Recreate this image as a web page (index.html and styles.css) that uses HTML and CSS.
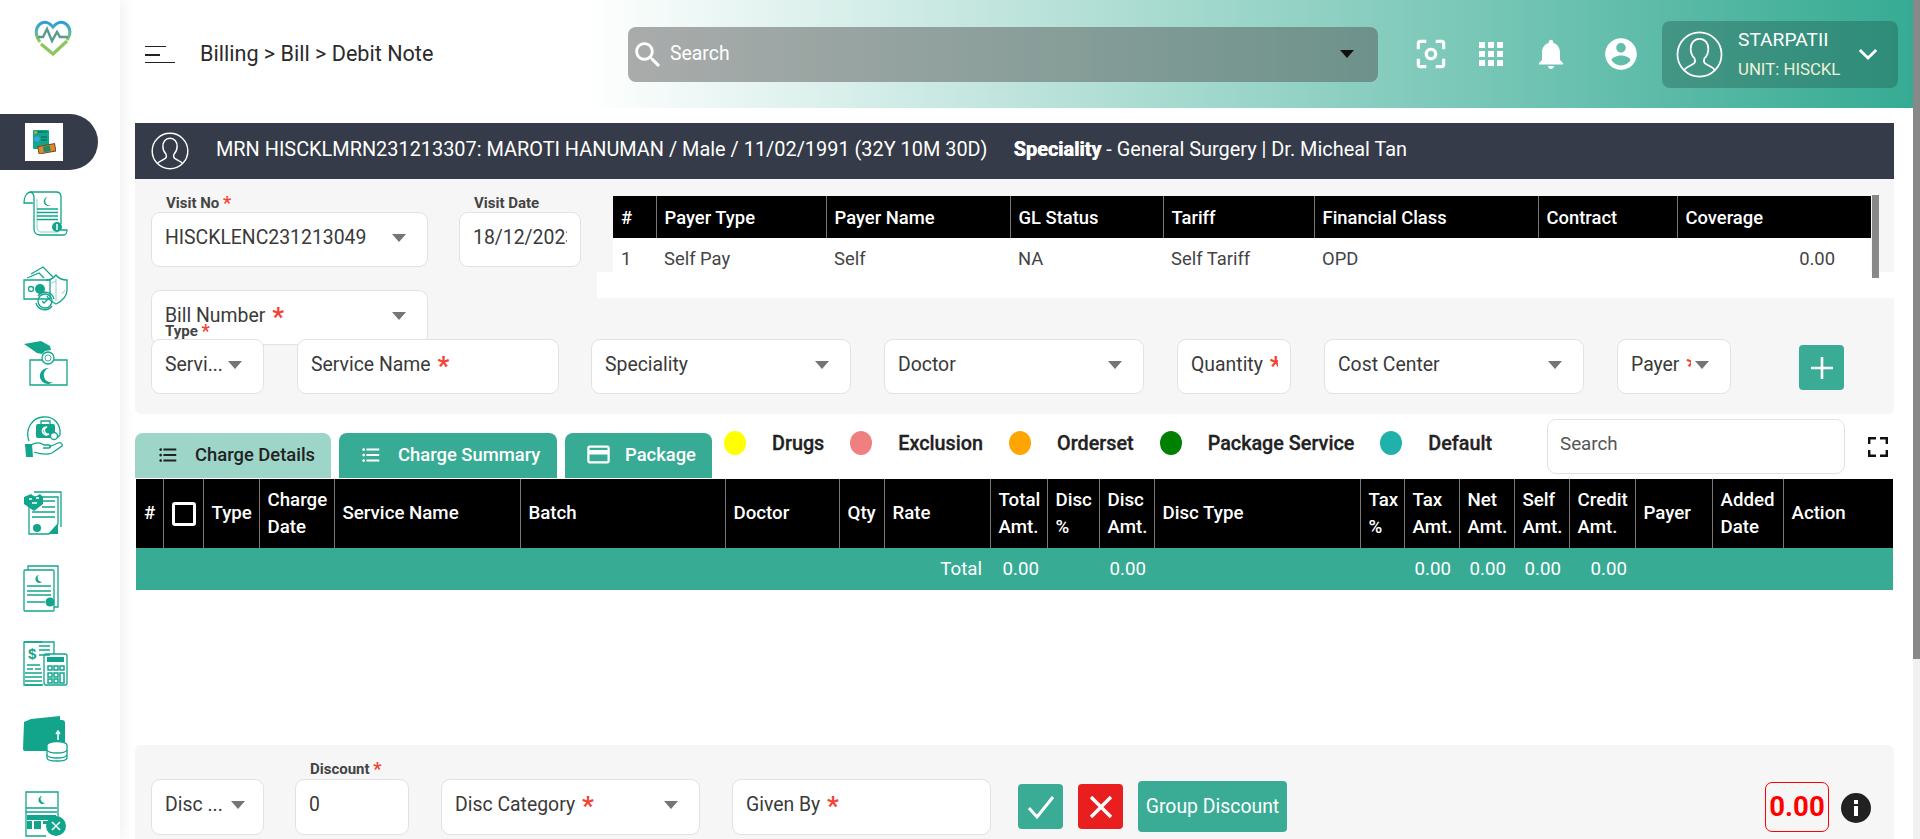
FILE: index.html
```html
<!DOCTYPE html>
<html lang="en">
<head>
    <meta charset="UTF-8" />
    <meta name="viewport" content="width=device-width, initial-scale=1.0" />
    <title>Debit Note</title>
    <link rel="stylesheet" href="styles.css">
</head>
<body>
<div class="app">
    <aside class="sidebar">
        <div class="logo">
            <svg width="38" height="36" viewBox="0 0 38 36" fill="none">
                <defs>
                    <linearGradient id="logoGrad" x1="0" y1="0" x2="0" y2="1">
                        <stop offset="0" stop-color="#2a9fd6"/>
                        <stop offset="0.55" stop-color="#5fb5a0"/>
                        <stop offset="1" stop-color="#9ccc4a"/>
                    </linearGradient>
                </defs>
                <path d="M6 22C1 16 1 8 6 4c4-3 9-2 13 3 4-5 9-6 13-3 5 4 5 11 1 16" stroke="url(#logoGrad)" stroke-width="3"/>
                <path d="M4 17h5l4-8 5 12 5-9 3 5h8" stroke="#5a9a8c" stroke-width="2.4"/>
                <path d="M7 24l12 10 14-13" stroke="#8cc65c" stroke-width="3.2"/>
            </svg>
        </div>
        <div class="nav-active">
            <div class="nav-active-box">
                <svg width="24" height="24" viewBox="0 0 24 24">
                    <rect x="1" y="0" width="16" height="19" rx="1" fill="#12a58c"/>
                    <circle cx="3.500" cy="2.500" r="1.400" fill="#f39a1e"/>
                    <circle cx="5" cy="9" r="2.800" fill="#35a8e0"/>
                    <path d="M6 2h9M9 7h6M9 10h6" stroke="#0a5f50" stroke-width="1"/>
                    <rect x="6" y="15" width="17" height="7.500" fill="#d98a32" stroke="#7a4a12" transform="rotate(-10 15 17)"/>
                    <rect x="11" y="16" width="7" height="5.500" fill="#1e8a6f" transform="rotate(-10 15 17)"/>
                </svg>
            </div>
        </div>
        <div class="nav-item">
            <svg class="nav-icon" viewBox="0 0 45 45">
                <path d="M10 12H1c0-5 2-10 6-11h26c3 0 5 2 5 5v27"/>
                <path d="M7 1c3 0 4 3 4 7v30c0 4 3 6 6 6h24c2 0 3-3 3-5h-6"/>
                <path class="thin" d="M14 8v28c0 3 2 5 4 5h17"/>
                <path class="solid" d="M25 6a4.500 4.500 0 1 0 3 8 4 4 0 0 1-3-8z"/>
                <path d="M14 18h21M14 21.500h21M14 25h21M14 28.500h21"/>
                <circle class="solid" cx="34" cy="36" r="5"/>
                <path class="white" d="M34 33v6"/>
            </svg>
        </div>
        <div class="nav-item">
            <svg class="nav-icon" viewBox="0 0 45 45">
                <path d="M1 14h26v19H1z"/>
                <path d="M4 12l12-5 5 5M8 8l12-7 10 10"/>
                <circle cx="8" cy="23" r="2.500"/>
                <circle class="solid" cx="17" cy="23" r="5"/>
                <path d="M23 14c4 0 7-1 10-5 3 4 7 5 11 5v10c0 7-5 11-11 14-4-2-7-4-9-8"/>
                <path class="thin" d="M33 13v22M27 17c2 0 4-1 6-2M39 28l3-4"/>
                <circle cx="22" cy="35" r="7"/>
                <path d="M13 37a9 9 0 0 0 16 3M31 33a9 9 0 0 0-16-3"/>
                <path d="M19 35l2 2 4-4"/>
            </svg>
        </div>
        <div class="nav-item">
            <svg class="nav-icon" viewBox="0 0 45 45">
                <path class="solid" d="M1 3l17-3 9 5 1 4-6 1-3 3-5-1z"/>
                <path d="M8 19h37v25H8z" transform="translate(-1 0)"/>
                <circle class="paper" cx="25" cy="17" r="6"/>
                <circle class="thin-paper" cx="25" cy="17" r="3"/>
                <path class="solid" d="M26 27a8 8 0 1 0 4 14 7 7 0 0 1-4-14z"/>
            </svg>
        </div>
        <div class="nav-item">
            <svg class="nav-icon" viewBox="0 0 45 45">
                <path d="M6 25C2 14 8 2 20 1c11-1 18 7 17 18l-3 3"/>
                <rect class="solid" x="13" y="8" width="19" height="14" rx="2"/>
                <path d="M18 8V5h9v3"/>
                <path class="white" d="M24 11a4 4 0 1 0 2 7 3 3 0 0 1-2-7z"/>
                <circle class="paper" cx="31" cy="20" r="3.500"/>
                <path d="M8 29c5-3 9-3 13 0h5c2 0 2 3 0 3h-6M26 31l9-4c3-1 5 1 4 3l-10 7c-5 2-12 1-18-1"/>
                <path class="solid" d="M2 28h7l1 13H3z"/>
            </svg>
        </div>
        <div class="nav-item">
            <svg class="nav-icon" viewBox="0 0 45 45">
                <path d="M11 1h27v35"/>
                <path d="M6 6h29v27l-9 10H6z"/>
                <path d="M19 10h13M19 16h13M9 21h23M9 26h23"/>
                <path class="solid" d="M1 6l7-3 4 3 5-3 3 3v7l-9 7-10-7z"/>
                <path class="white" d="M6 8h3M13 7h3M9 12h5"/>
                <circle class="solid" cx="14" cy="37" r="4"/>
                <path class="solid" d="M35 33v10H26z"/>
            </svg>
        </div>
        <div class="nav-item">
            <svg class="nav-icon" viewBox="0 0 45 45">
                <path d="M5 4V0h30v41h-4"/>
                <rect x="1" y="4" width="30" height="41" rx="1"/>
                <path class="solid" d="M16 9a4 4 0 1 0 3 7 4 4 0 0 1-3-7z"/>
                <path d="M4 20h24M4 25h24M4 29h24M4 36h18"/>
                <circle class="solid" cx="27" cy="36" r="4.500"/>
            </svg>
        </div>
        <div class="nav-item">
            <svg class="nav-icon" viewBox="0 0 45 45">
                <path d="M19 1H1v43h19"/>
                <path d="M1 1h30v12"/>
                <text class="dollar" x="5" y="18">$</text>
                <path d="M16 5h11M16 9h11M16 14h11M4 24h13M4 28h6M12 28h6"/>
                <path d="M2 32h17M2 36h17M2 40h17M2 44h17"/>
                <rect x="21" y="13" width="23" height="31" rx="2"/>
                <rect class="solid" x="24" y="16" width="17" height="5"/>
                <path class="thick" d="M25 25h4v4h-4zM31 25h4v4h-4zM37 25h4v4h-4zM25 32h4v4h-4zM31 32h4v4h-4zM25 38h4v4h-4zM31 38h4v4h-4zM37 32h4v10h-4z"/>
            </svg>
        </div>
        <div class="nav-item">
            <svg class="nav-icon" viewBox="0 0 45 45">
                <path class="solid" d="M8 3L37 0v4h2c2 0 3 1 3 3v28H2c-1 0-2-1-2-2L1 6z"/>
                <path class="white" d="M35 15v9M33 18l2-3 2 3"/>
                <ellipse class="solid-line" cx="34" cy="29" rx="10" ry="3.500"/>
                <path class="solid-line" d="M24 29v13c0 4 20 4 20 0V29"/>
                <path d="M24 34c2 4 18 4 20 0M24 39c2 4 18 4 20 0"/>
            </svg>
        </div>
        <div class="nav-item">
            <svg class="nav-icon" viewBox="0 0 45 45">
                <path d="M23 45H3V1h32v31"/>
                <path class="solid" d="M19 5a4 4 0 1 0 3 7 4 4 0 0 1-3-7z"/>
                <path d="M3 17h31M3 21h31"/>
                <path class="solid" d="M4 24h29v5H4zM4 30h5v8H4zM11 30h7v8h-7zM20 30h13v3H20z"/>
                <circle class="solid" cx="33" cy="35" r="10"/>
                <path class="white" d="M29 31l8 8M37 31l-8 8"/>
            </svg>
        </div>
    </aside>

    <div class="main">
        <header class="topbar">
            <div class="burger"><span class="b1"></span><span class="b2"></span><span class="b3"></span></div>
            <div class="crumb">Billing &gt; Bill &gt; Debit Note</div>
            <div class="global-search">
                <svg width="34" height="34" viewBox="0 0 24 24" fill="#fff"><path d="M15.500 14h-.79l-.28-.27C15.410 12.590 16 11.110 16 9.500 16 5.910 13.090 3 9.500 3S3 5.910 3 9.500 5.910 16 9.500 16c1.610 0 3.090-.59 4.230-1.570l.27.28v.79l5 4.990L20.490 19l-4.990-5zm-6 0C7.010 14 5 11.990 5 9.500S7.010 5 9.500 5 14 7.010 14 9.500 11.990 14 9.500 14z"/></svg>
                <span class="global-search-text">Search</span>
                <span class="black-arrow"></span>
            </div>
            <div class="top-icons">
                <svg class="top-icon" viewBox="0 0 24 24"><path d="M5 15H3v4c0 1.100.9 2 2 2h4v-2H5v-4zM5 5h4V3H5c-1.100 0-2 .9-2 2v4h2V5zm14-2h-4v2h4v4h2V5c0-1.100-.9-2-2-2zm0 16h-4v2h4c1.100 0 2-.9 2-2v-4h-2v4zM12 8c-2.210 0-4 1.790-4 4s1.790 4 4 4 4-1.790 4-4-1.790-4-4-4zm0 6c-1.100 0-2-.9-2-2s.9-2 2-2 2 .9 2 2-.9 2-2 2z"/></svg>
                <svg class="top-icon" viewBox="0 0 24 24"><path d="M4 8h4V4H4v4zm6 12h4v-4h-4v4zm-6 0h4v-4H4v4zm0-6h4v-4H4v4zm6 0h4v-4h-4v4zm6-10v4h4V4h-4zm-6 4h4V4h-4v4zm6 6h4v-4h-4v4zm0 6h4v-4h-4v4z"/></svg>
                <svg class="top-icon" viewBox="0 0 24 24"><path d="M12 22c1.100 0 2-.9 2-2h-4c0 1.100.89 2 2 2zm6-6v-5c0-3.070-1.640-5.640-4.500-6.320V4c0-.83-.67-1.500-1.500-1.500s-1.500.67-1.500 1.500v.68C7.630 5.360 6 7.920 6 11v5l-2 2v1h16v-1l-2-2z"/></svg>
                <svg class="top-icon account" viewBox="0 0 24 24"><path d="M12 2C6.480 2 2 6.480 2 12s4.480 10 10 10 10-4.480 10-10S17.520 2 12 2zm0 3c1.660 0 3 1.340 3 3s-1.340 3-3 3-3-1.340-3-3 1.340-3 3-3zm0 14.200c-2.500 0-4.710-1.280-6-3.220.03-1.990 4-3.080 6-3.080 1.990 0 5.970 1.090 6 3.080-1.290 1.940-3.500 3.220-6 3.220z"/></svg>
            </div>
            <div class="user-box">
                <svg class="avatar-big" viewBox="0 0 48 48"><use href="#avatar"/></svg>
                <div class="user-text">
                    <div class="user-name">STARPATII</div>
                    <div class="user-unit">UNIT: HISCKL</div>
                </div>
                <svg class="user-chevron" viewBox="0 0 24 24"><path d="M5 8.500l7 7 7-7"/></svg>
            </div>
        </header>

        <div class="content">
            <div class="patient-bar">
                <svg class="avatar-small" viewBox="0 0 48 48">
                    <g id="avatar" fill="none" stroke="#fff" stroke-width="1.800">
                        <circle cx="24" cy="24" r="22.500"/>
                        <path d="M24 8c-6 0-9 5-9 10 0 4 2 8 4 10 1 3 0 5-2 6-3 2-7 3-9 6"/>
                        <path d="M24 8c6 0 9 5 9 10 0 4-2 8-4 10-1 3 0 5 2 6 3 2 7 3 9 6"/>
                    </g>
                </svg>
                <span class="patient-text">MRN HISCKLMRN231213307: MAROTI HANUMAN / Male / 11/02/1991 (32Y 10M 30D)</span>
                <span class="patient-spec"><b>Speciality</b> - General Surgery | Dr. Micheal Tan</span>
            </div>

            <div class="top-panel">
                <div class="top-grid">
                    <div class="left-forms">
                        <div class="visit-row">
                            <div class="field w-visit">
                                <label class="float-label">Visit No <i>*</i></label>
                                <span class="field-text">HISCKLENC231213049</span><span class="arrow"></span>
                            </div>
                            <div class="field w-date">
                                <label class="float-label">Visit Date</label>
                                <span class="field-text clip clip-date">18/12/2023</span>
                            </div>
                        </div>
                        <div class="field w-visit bill-field">
                            <span class="field-text">Bill Number <i>*</i></span><span class="arrow"></span>
                        </div>
                    </div>
                    <div class="payer-col">
                        <div class="payer-gray">
                            <table class="payer-table">
                                <thead>
                                    <tr><th>#</th><th>Payer Type</th><th>Payer Name</th><th>GL Status</th><th>Tariff</th><th>Financial Class</th><th>Contract</th><th>Coverage</th></tr>
                                </thead>
                                <tbody>
                                    <tr><td>1</td><td>Self Pay</td><td>Self</td><td>NA</td><td>Self Tariff</td><td>OPD</td><td></td><td class="num">0.00</td></tr>
                                </tbody>
                            </table>
                            <div class="payer-thumb"></div>
                        </div>
                        <div class="white-strip"></div>
                    </div>
                </div>

                <div class="service-row">
                    <div class="field w-type">
                        <label class="float-label type-label">Type <i>*</i></label>
                        <span class="field-text">Servi...</span><span class="arrow"></span>
                    </div>
                    <div class="field w-service"><span class="field-text">Service Name <i>*</i></span></div>
                    <div class="field w-wide"><span class="field-text">Speciality</span><span class="arrow"></span></div>
                    <div class="field w-wide"><span class="field-text">Doctor</span><span class="arrow"></span></div>
                    <div class="field w-small"><span class="field-text clip clip-qty">Quantity <i>*</i></span></div>
                    <div class="field w-wide"><span class="field-text">Cost Center</span><span class="arrow"></span></div>
                    <div class="field w-small"><span class="field-text clip clip-payer">Payer <i>*</i></span><span class="arrow"></span></div>
                    <button class="add-btn">
                        <svg width="30" height="30" viewBox="0 0 30 30"><path d="M15 4v22M4 15h22" stroke="#fff" stroke-width="2.600"/></svg>
                    </button>
                </div>
            </div>

            <div class="toolbar">
                <div class="tabs">
                    <div class="tab tab-on">
                        <svg class="tab-icon" viewBox="0 0 24 24"><path d="M4 10.500c-.83 0-1.500.67-1.500 1.500s.67 1.500 1.500 1.500 1.500-.67 1.500-1.500-.67-1.500-1.500-1.500zm0-6c-.83 0-1.500.67-1.500 1.500S3.170 7.500 4 7.500 5.500 6.830 5.500 6 4.830 4.500 4 4.500zm0 12c-.83 0-1.500.68-1.500 1.500s.68 1.500 1.500 1.500 1.500-.68 1.500-1.500-.67-1.500-1.500-1.500zM7 19h14v-2H7v2zm0-6h14v-2H7v2zm0-8v2h14V5H7z"/></svg>
                        Charge Details
                    </div>
                    <div class="tab tab-summary">
                        <svg class="tab-icon" viewBox="0 0 24 24"><path d="M4 10.500c-.83 0-1.500.67-1.500 1.500s.67 1.500 1.500 1.500 1.500-.67 1.500-1.500-.67-1.500-1.500-1.500zm0-6c-.83 0-1.500.67-1.500 1.500S3.170 7.500 4 7.500 5.500 6.830 5.500 6 4.830 4.500 4 4.500zm0 12c-.83 0-1.500.68-1.500 1.500s.68 1.500 1.500 1.500 1.500-.68 1.500-1.500-.67-1.500-1.500-1.500zM7 19h14v-2H7v2zm0-6h14v-2H7v2zm0-8v2h14V5H7z"/></svg>
                        Charge Summary
                    </div>
                    <div class="tab tab-package">
                        <svg class="tab-icon" viewBox="0 0 24 24"><path d="M20 4H4c-1.100 0-2 .9-2 2v12c0 1.100.9 2 2 2h16c1.100 0 2-.9 2-2V6c0-1.100-.9-2-2-2zm0 14H4v-6h16v6zm0-10H4V6h16v2z"/></svg>
                        Package
                    </div>
                </div>
                <div class="legend">
                    <span class="dot dot-drugs"></span><span class="legend-text">Drugs</span>
                    <span class="dot dot-excl"></span><span class="legend-text">Exclusion</span>
                    <span class="dot dot-order"></span><span class="legend-text">Orderset</span>
                    <span class="dot dot-pack"></span><span class="legend-text">Package Service</span>
                    <span class="dot dot-default"></span><span class="legend-text">Default</span>
                </div>
                <div class="table-search">Search</div>
                <svg class="fullscreen" viewBox="0 0 20 20"><path d="M1.200 7V1.200H8M12 1.200h6.800V7M18.800 13v5.800H12M8 18.800H1.200V13"/></svg>
            </div>

            <table class="charge-table">
                <thead>
                    <tr>
                        <th>#</th><th><span class="check"></span></th><th>Type</th><th>Charge Date</th><th>Service Name</th><th>Batch</th><th>Doctor</th><th>Qty</th><th>Rate</th><th>Total Amt.</th><th>Disc %</th><th>Disc Amt.</th><th>Disc Type</th><th>Tax %</th><th>Tax Amt.</th><th>Net Amt.</th><th>Self Amt.</th><th>Credit Amt.</th><th>Payer</th><th>Added Date</th><th>Action</th>
                    </tr>
                </thead>
                <tbody>
                    <tr>
                        <td></td><td></td><td></td><td></td><td></td><td></td><td></td><td></td><td class="num">Total</td><td class="num">0.00</td><td></td><td class="num">0.00</td><td></td><td></td><td class="num">0.00</td><td class="num">0.00</td><td class="num">0.00</td><td class="num">0.00</td><td></td><td></td><td></td>
                    </tr>
                </tbody>
            </table>

            <div class="bottom-panel">
                <div class="field w-disc"><span class="field-text">Disc ...</span><span class="arrow"></span></div>
                <div class="field w-discount">
                    <label class="float-label discount-label">Discount <i>*</i></label>
                    <span class="field-text">0</span>
                </div>
                <div class="field w-cat"><span class="field-text">Disc Category <i>*</i></span><span class="arrow"></span></div>
                <div class="field w-cat"><span class="field-text">Given By <i>*</i></span></div>
                <button class="square-btn btn-ok">
                    <svg width="34" height="34" viewBox="0 0 34 34" fill="none"><path d="M5 18l8 9L29 7" stroke="#fff" stroke-width="3"/></svg>
                </button>
                <button class="square-btn btn-no">
                    <svg width="34" height="34" viewBox="0 0 34 34" fill="none"><path d="M7 7l20 20M27 7L7 27" stroke="#fff" stroke-width="3.400"/></svg>
                </button>
                <button class="group-btn">Group Discount</button>
                <div class="balance">0.00</div>
                <div class="info-dot">
                    <svg width="30" height="30" viewBox="0 0 30 30"><circle cx="15" cy="15" r="15" fill="#212121"/><path d="M13 13h4v10h-4zM13 7h4v4h-4z" fill="#fff"/></svg>
                </div>
            </div>
        </div>
    </div>

    <div class="page-scroll"><div class="page-thumb"></div></div>
</div>
</body>
</html>
```

FILE: styles.css
```css
* {
    box-sizing: border-box;
}

body {
    margin: 0;
    font-family: Roboto, "Liberation Sans", sans-serif;
    color: #333;
    background-color: #fff;
    overflow: hidden;
}

.app {
    display: flex;
    height: 839px;
    overflow: hidden;
}

/* left menu */
.sidebar {
    width: 120px;
    flex: none;
    background-color: #fff;
    box-shadow: 2px 0 14px rgba(40, 40, 90, 0.08);
    position: relative;
    z-index: 2;
    height: 839px;
    overflow: hidden;
}

.logo {
    height: 114px;
    padding: 20px 0 0 34px;
}

.nav-active {
    width: 98px;
    height: 56px;
    margin-bottom: 6px;
    background-color: #353b48;
    border-radius: 0 28px 28px 0;
    padding: 9px 0 0 25px;
}

.nav-active-box {
    width: 38px;
    height: 38px;
    background-color: #fff;
    padding: 7px;
}

.nav-item {
    width: 90px;
    height: 75px;
    display: flex;
    align-items: center;
    justify-content: center;
}

.nav-icon {
    width: 45px;
    height: 45px;
    fill: none;
    stroke: #12a58c;
    stroke-width: 1.300;
    overflow: visible;
}

.nav-icon .solid {
    fill: #12a58c;
    stroke: none;
}

.nav-icon .white {
    stroke: #fff;
    stroke-width: 1.500;
}

.nav-icon .thin {
    stroke-width: 0.800;
    stroke: #6cc8b7;
}

.nav-icon .paper {
    fill: #fff;
}

.nav-icon .thin-paper {
    fill: #fff;
    stroke-width: 0.800;
}

.nav-icon .solid-line {
    fill: #fff;
    stroke-width: 1.300;
}

.nav-icon .thick {
    stroke-width: 1.500;
}

.nav-icon .dollar {
    font-family: "Liberation Sans", sans-serif;
    font-size: 15px;
    font-weight: 700;
    fill: #12a58c;
    stroke: none;
}

.main {
    flex: 1;
    min-width: 0;
}

/* header */
.topbar {
    height: 108px;
    display: flex;
    align-items: center;
    background: linear-gradient(90deg, #fff 26%, #36ab93 100%);
}

.burger {
    width: 30px;
    margin-left: 25px;
    display: flex;
    flex-direction: column;
}

.burger span {
    display: block;
    background-color: #222;
}

.b1 {
    width: 21px;
    height: 1px;
    margin-bottom: 7px;
}

.b2 {
    width: 15px;
    height: 2px;
    margin-bottom: 6px;
}

.b3 {
    width: 30px;
    height: 1px;
}

.crumb {
    width: 428px;
    margin-left: 25px;
    margin-top: -2px;
    font-size: 21.600px;
    color: #2b2b2b;
}

.global-search {
    width: 750px;
    height: 55px;
    margin-top: 1px;
    border-radius: 8px;
    background-color: rgba(80, 80, 80, 0.47);
    display: flex;
    align-items: center;
    padding: 0 24px 0 3px;
    color: #fff;
}

.global-search-text {
    font-size: 19.400px;
    flex: 1;
    margin-left: 5px;
    margin-top: -2px;
}

.black-arrow {
    width: 0;
    height: 0;
    border-left: 7.500px solid transparent;
    border-right: 7.500px solid transparent;
    border-top: 8px solid #111;
    margin-top: -2px;
}

.top-icons {
    display: flex;
    align-items: center;
    gap: 24px;
    margin-left: 34px;
}

.top-icon {
    width: 36px;
    height: 36px;
    fill: #fff;
}

.top-icon:first-child {
    width: 38px;
    height: 38px;
    margin-right: -1px;
}

.top-icon.account {
    width: 38px;
    height: 38px;
    margin-left: 9px;
}

.user-box {
    width: 236px;
    height: 67px;
    margin-left: 22px;
    border-radius: 8px;
    background-color: rgba(30, 90, 75, 0.38);
    display: flex;
    align-items: center;
    padding: 0 0 0 14px;
    color: #fff;
}

.avatar-big {
    width: 47px;
    height: 47px;
    flex: none;
}

.user-text {
    margin-left: 15px;
    flex: 1;
}

.user-name {
    font-size: 19.200px;
    line-height: 22px;
    margin-bottom: 8px;
}

.user-unit {
    font-size: 16.800px;
    line-height: 20px;
    color: #eef2d8;
}

.user-chevron {
    width: 28px;
    height: 28px;
    fill: none;
    stroke: #fff;
    stroke-width: 2.400;
    margin-right: 16px;
}

/* page body */
.content {
    padding: 15px 19px 0 15px;
}

.patient-bar {
    height: 56px;
    background-color: #353b48;
    color: #fff;
    display: flex;
    align-items: center;
    padding-left: 16px;
    font-size: 19.900px;
}

.avatar-small {
    width: 38px;
    height: 38px;
    flex: none;
}

.patient-text {
    margin-left: 27px;
    margin-top: -3px;
}

.patient-spec {
    margin-left: 26px;
    margin-top: -3px;
}

.patient-spec b {
    font-weight: 700;
    text-shadow: 0.500px 0 0 #fff;
}

.top-panel {
    height: 235px;
    background-color: #f6f6f6;
    border-radius: 0 0 6px 6px;
}

.top-grid {
    height: 160px;
    display: flex;
}

.left-forms {
    width: 462px;
    flex: none;
    padding: 33px 0 0 16px;
}

.visit-row {
    display: flex;
    gap: 31px;
    margin-bottom: 23px;
}

.field {
    position: relative;
    height: 55px;
    flex: none;
    background-color: #fff;
    border: 1px solid #e2e2e2;
    border-radius: 9px;
    padding: 13px 0 0 13px;
    font-size: 19.400px;
    line-height: 24px;
    color: #3a3a3a;
}

.field-text {
    display: block;
    white-space: nowrap;
}

.field-text i,
.float-label i {
    color: #f44336;
    font-style: normal;
    font-weight: 700;
    line-height: 0;
}

.field-text i {
    font-size: 26px;
    vertical-align: -4px;
    margin-left: 2px;
}

.float-label i {
    font-size: 18px;
    vertical-align: -1px;
}

.field-text.clip {
    overflow: hidden;
}

.clip-date {
    width: 94px;
}

.clip-qty {
    width: 87px;
}

.clip-payer {
    width: 60px;
}

.arrow {
    position: absolute;
    right: 21px;
    top: 21px;
    width: 0;
    height: 0;
    border-left: 7px solid transparent;
    border-right: 7px solid transparent;
    border-top: 8px solid #757575;
}

.float-label {
    position: absolute;
    left: 14px;
    top: -19px;
    font-size: 15px;
    line-height: 18px;
    font-weight: 700;
    color: #444;
}

.type-label {
    left: 13px;
    top: -18px;
}

.discount-label {
    top: -20px;
}

.w-visit {
    width: 277px;
}

.w-date {
    width: 122px;
}

.payer-col {
    flex: 1;
    min-width: 0;
}

.payer-gray {
    height: 93px;
    padding: 17px 0 0 16px;
    position: relative;
}

.payer-table {
    width: 1258px;
    border-collapse: collapse;
    table-layout: fixed;
    font-size: 18.400px;
    background-color: #fff;
    position: relative;
    z-index: 1;
}

.payer-table th {
    height: 42px;
    background-color: #000;
    color: #fff;
    font-weight: 500;
    text-align: left;
    padding: 0 8px;
    border-right: 1px solid #777;
}

.payer-table th:last-child {
    border-right: none;
}

.payer-table td {
    height: 41px;
    padding: 0 8px;
    color: #444;
}

.payer-table td.num {
    text-align: right;
    padding-right: 36px;
}

.payer-table th:nth-child(1) { width: 43px; }
.payer-table th:nth-child(2) { width: 170px; }
.payer-table th:nth-child(3) { width: 184px; }
.payer-table th:nth-child(4) { width: 153px; }
.payer-table th:nth-child(5) { width: 151px; }
.payer-table th:nth-child(6) { width: 224px; }
.payer-table th:nth-child(7) { width: 139px; }

.payer-thumb {
    position: absolute;
    left: 1275px;
    top: 16px;
    width: 7px;
    height: 83px;
    background-color: #888;
    z-index: 2;
}

.white-strip {
    height: 26px;
    background-color: #fff;
}

.service-row {
    display: flex;
    padding-left: 16px;
}

.w-type {
    width: 113px;
    margin-right: 33px;
}

.w-service {
    width: 262px;
    margin-right: 32px;
}

.w-wide {
    width: 260px;
    margin-right: 33px;
}

.w-small {
    width: 114px;
    margin-right: 33px;
}

.add-btn {
    width: 45px;
    height: 45px;
    margin: 6px 0 0 35px;
    padding: 0;
    border: none;
    border-radius: 4px;
    background-color: #3aab95;
    display: flex;
    align-items: center;
    justify-content: center;
}

.toolbar {
    height: 64px;
    padding-top: 5px;
    display: flex;
    align-items: flex-start;
}

.tabs {
    display: flex;
    align-self: flex-end;
    gap: 8px;
}

.tab {
    height: 45px;
    padding-bottom: 2px;
    border-radius: 8px 8px 0 0;
    background-color: #38ab94;
    color: #fff;
    display: flex;
    align-items: center;
    font-size: 18.400px;
    font-weight: 500;
    padding-left: 22px;
}

.tab-on {
    width: 196px;
    background-color: #9dd5c9;
    color: #222;
}

.tab-summary {
    width: 218px;
    padding-left: 21px;
}

.tab-package {
    width: 147px;
    padding-left: 20px;
}

.tab-icon {
    width: 22px;
    height: 22px;
    fill: currentColor;
    margin-right: 16px;
    flex: none;
}

.tab-package .tab-icon {
    width: 27px;
    height: 27px;
    margin-right: 13px;
}

.legend {
    display: flex;
    align-items: center;
    margin: 12px 0 0 12px;
    height: 24px;
}

.dot {
    width: 22px;
    height: 24px;
    border-radius: 50%;
    margin-right: 26px;
}

.legend-text {
    font-size: 19.800px;
    font-weight: 500;
    color: #222;
    margin-right: 26px;
    -webkit-text-stroke: 0.300px #222;
}

.dot-drugs { background-color: #ffff00; }
.dot-excl { background-color: #f08080; }
.dot-order { background-color: #ffa500; }
.dot-pack { background-color: #008000; }
.dot-default { background-color: #20b2aa; }

.table-search {
    width: 298px;
    height: 55px;
    margin-left: auto;
    border: 1px solid #e2e2e2;
    border-radius: 9px;
    padding: 12px 0 0 12px;
    font-size: 18.800px;
    line-height: 24px;
    color: #555;
}

.fullscreen {
    width: 20px;
    height: 20px;
    margin: 18px 6px 0 23px;
    flex: none;
    fill: none;
    stroke: #111;
    stroke-width: 2.400;
}

.charge-table {
    width: 1757px;
    margin: 1px 0 0 1px;
    border-collapse: collapse;
    table-layout: fixed;
    font-size: 18.700px;
    color: #fff;
}

.charge-table th {
    height: 69px;
    background-color: #000;
    font-weight: 500;
    line-height: 27px;
    text-align: left;
    padding: 0 2px 0 8px;
    border-right: 1px solid #777;
}

.charge-table th:last-child {
    border-right: none;
}

.charge-table td {
    height: 42px;
    background-color: #38ab94;
    padding: 0 8px 0 0;
}

.charge-table td.num {
    text-align: right;
}

.charge-table th:nth-child(1) { width: 27px; }
.charge-table th:nth-child(2) { width: 40px; }
.charge-table th:nth-child(3) { width: 56px; }
.charge-table th:nth-child(4) { width: 75px; }
.charge-table th:nth-child(5) { width: 186px; }
.charge-table th:nth-child(6) { width: 205px; }
.charge-table th:nth-child(7) { width: 114px; }
.charge-table th:nth-child(8) { width: 45px; }
.charge-table th:nth-child(9) { width: 106px; }
.charge-table th:nth-child(10) { width: 57px; }
.charge-table th:nth-child(11) { width: 52px; }
.charge-table th:nth-child(12) { width: 55px; }
.charge-table th:nth-child(13) { width: 206px; }
.charge-table th:nth-child(14) { width: 44px; }
.charge-table th:nth-child(15) { width: 55px; }
.charge-table th:nth-child(16) { width: 55px; }
.charge-table th:nth-child(17) { width: 55px; }
.charge-table th:nth-child(18) { width: 66px; }
.charge-table th:nth-child(19) { width: 77px; }
.charge-table th:nth-child(20) { width: 71px; }

.check {
    display: block;
    width: 24px;
    height: 24px;
    border: 3px solid #fff;
    border-radius: 3px;
}

.bottom-panel {
    margin-top: 155px;
    height: 100px;
    background-color: #f6f6f6;
    border-radius: 6px 6px 0 0;
    display: flex;
    align-items: flex-start;
    padding: 34px 0 0 16px;
}

.w-disc {
    width: 113px;
    height: 56px;
    margin-right: 31px;
}

.w-discount {
    width: 114px;
    height: 56px;
    margin-right: 32px;
}

.w-cat {
    width: 259px;
    height: 56px;
    margin-right: 32px;
}

.w-disc .arrow {
    right: 18px;
}

.square-btn {
    width: 45px;
    height: 45px;
    margin-top: 5px;
    padding: 0;
    border: none;
    border-radius: 4px;
    display: flex;
    align-items: center;
    justify-content: center;
}

.btn-ok {
    margin-left: -5px;
    background-color: #3aab95;
}

.btn-no {
    margin-left: 15px;
    background-color: #e91e1e;
}

.group-btn {
    width: 149px;
    height: 51px;
    margin: 2px 0 0 15px;
    padding: 0;
    border: none;
    border-radius: 4px;
    background-color: #3aab95;
    color: #fff;
    font-family: Roboto, "Liberation Sans", sans-serif;
    font-size: 19.400px;
}

.balance {
    width: 64px;
    height: 50px;
    margin: 3px 0 0 auto;
    border: 1px solid #f00;
    border-radius: 7px;
    color: #f00;
    font-size: 27.500px;
    font-weight: 700;
    line-height: 48px;
    text-align: center;
}

.info-dot {
    width: 30px;
    height: 30px;
    margin: 14px 23px 0 12px;
}

.page-scroll {
    width: 7px;
    flex: none;
    background-color: #f1f1f1;
}

.page-thumb {
    height: 659px;
    background-color: #888;
}
```
